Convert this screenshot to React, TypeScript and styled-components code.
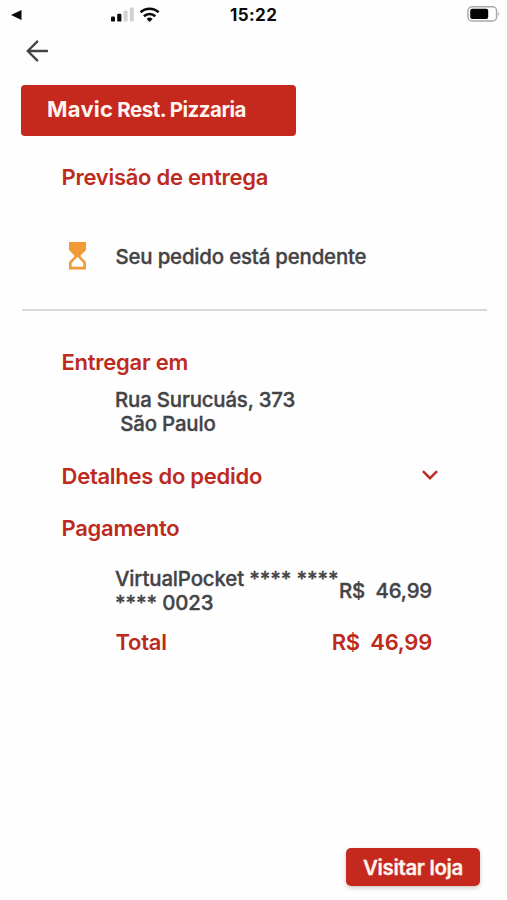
import React from "react";
import styled, { createGlobalStyle } from "styled-components";

const RED = "#c5281c";
const TEXT_RED = "#bd2a20";
const INK = "#444345";

const GlobalStyle = createGlobalStyle`
  * { box-sizing: border-box; }
  body { margin: 0; background: #fefefe; font-family: Inter, "Liberation Sans", sans-serif; }
`;

const Screen = styled.div`
  width: 507px;
  height: 900px;
  display: flex;
  flex-direction: column;
  background: #fefefe;
  color: ${INK};
  overflow: hidden;
`;

const StatusBar = styled.header`
  height: 30px;
  flex: none;
  display: grid;
  grid-template-columns: 110px 120px 237px 1fr;
  align-items: center;
`;

const BackToApp = styled.svg`
  width: 11px;
  height: 10px;
  margin-left: 11px;
`;

const SignalIcons = styled.svg`
  width: 50px;
  height: 17px;
  margin-bottom: 1px;
`;

const Clock = styled.time`
  font-size: 17px;
  line-height: 30px;
  font-weight: 700;
  letter-spacing: 0.4px;
  color: #0b0b0b;
`;

const Battery = styled.svg`
  width: 34px;
  height: 18px;
  margin-bottom: 2px;
`;

const NavBar = styled.nav`
  height: 55px;
  flex: none;
  padding: 9px 0 0 25px;
`;

const BackButton = styled.button`
  display: block;
  padding: 0;
  border: 0;
  background: none;
  color: ${INK};
  line-height: 0;
`;

const StoreBanner = styled.h1`
  flex: none;
  width: 275px;
  height: 51px;
  margin: 0 0 0 21px;
  padding-left: 26px;
  display: flex;
  align-items: baseline;
  gap: 4px;
  border-radius: 4px;
  background: ${RED};
  color: #fff4ef;
  line-height: 49px;
`;

const StoreName = styled.span`
  font-size: 22px;
  font-weight: 650;
  letter-spacing: 0.25px;
`;

const StoreKind = styled.span`
  font-size: 20.5px;
  font-weight: 700;
  letter-spacing: -0.5px;
`;

const Heading = styled.h2`
  margin: 0;
  font-size: 22px;
  line-height: 28px;
  font-weight: 600;
  letter-spacing: -0.26px;
  color: ${TEXT_RED};
  white-space: pre;
`;

const Forecast = styled.section`
  flex: none;
  height: 175px;
  margin: 0 20px 0 22px;
  padding: 27px 0 0 39.5px;
  border-bottom: 2px solid #d8d8d8;
`;

const OrderStatus = styled.div`
  display: flex;
  align-items: center;
  margin-top: 51px;
`;

const Hourglass = styled.svg`
  width: 18px;
  height: 28px;
  margin: 0 28.5px 0 7.5px;
`;

const Body = styled.p<{ $tracking?: number }>`
  margin: 0;
  padding-top: 1px;
  margin-bottom: -1px;
  font-size: 20.4px;
  line-height: 24.4px;
  font-weight: 500;
  letter-spacing: ${(p) => p.$tracking ?? -0.17}px;
  -webkit-text-stroke: 0.35px currentColor;
  white-space: pre;
`;

const Details = styled.main`
  padding: 37px 75px 0 61.5px;
`;

const Address = styled.div`
  margin: 11px 0 26px 53.5px;
  padding-bottom: 1px;
`;

const Toggle = styled.div`
  display: flex;
  justify-content: space-between;
  align-items: center;
  margin: -1px 0 24px;
`;

const Chevron = styled.svg`
  width: 18px;
  height: 12px;
  margin: 0 -7px 2px 0;
`;

const PaymentRow = styled.div`
  display: flex;
  align-items: center;
  justify-content: space-between;
  margin: 24px 0 13px 53.5px;
`;

const TotalRow = styled.div`
  display: flex;
  justify-content: space-between;
  margin-left: 54px;
`;

const Footer = styled.footer`
  margin-top: auto;
  padding: 0 27px 14px 0;
  display: flex;
  justify-content: flex-end;
`;

const VisitButton = styled.button`
  width: 134px;
  height: 38px;
  padding: 1px 0 0;
  border: 0;
  border-radius: 5px;
  background: ${RED};
  color: #fff4ef;
  font: 600 20.5px/37px Inter, "Liberation Sans", sans-serif;
  letter-spacing: -0.36px;
  -webkit-text-stroke: 0.3px currentColor;
  box-shadow: 0 2px 4px rgba(90, 40, 30, 0.25);
`;

export default function App() {
  return (
    <Screen>
      <GlobalStyle />
      <StatusBar>
        <BackToApp viewBox="0 0 11 10" aria-hidden>
          <path d="M0 5 10.5 0v10z" fill="#090909" />
        </BackToApp>
        <SignalIcons viewBox="0 0 50 17" aria-hidden>
          <rect x="1" y="10.6" width="4" height="5" rx="1.2" fill="#090909" />
          <rect x="7.2" y="7.8" width="4.2" height="7.8" rx="1.2" fill="#090909" />
          <rect x="13.6" y="4.4" width="4" height="11.2" rx="1.2" fill="#d2d2d2" />
          <rect x="19.8" y="1.4" width="4" height="14.2" rx="1.2" fill="#d2d2d2" />
          <g fill="none" stroke="#090909" strokeWidth="2.6">
            <path d="M30.6 6.3a13 13 0 0 1 18 0" />
            <path d="M33.9 10.2a8.4 8.4 0 0 1 11.4 0" />
          </g>
          <path d="M36.6 13a4.4 4.4 0 0 1 6 0l-3 3z" fill="#090909" />
        </SignalIcons>
        <Clock>15:22</Clock>
        <Battery viewBox="0 0 34 18" aria-hidden>
          <rect x="1" y="1.8" width="28.6" height="14.2" rx="4" fill="none" stroke="#aaa" strokeWidth="1.5" />
          <rect x="3.2" y="3.8" width="18" height="10.2" rx="2" fill="#050505" />
          <path d="M31.2 6.7q2 2.2 0 4.4z" fill="#aaa" />
        </Battery>
      </StatusBar>

      <NavBar>
        <BackButton aria-label="Voltar">
          <svg width="24" height="24" viewBox="0 0 24 24" fill="none" stroke="currentColor" strokeWidth="2.4" strokeLinecap="round" strokeLinejoin="round">
            <path d="M12.2 2.6 2.7 12l9.5 9.4M2.7 12H22" />
          </svg>
        </BackButton>
      </NavBar>

      <StoreBanner>
        <StoreName>Mavic</StoreName>
        <StoreKind>Rest. Pizzaria</StoreKind>
      </StoreBanner>

      <Forecast>
        <Heading>Previsão de entrega</Heading>
        <OrderStatus>
          <Hourglass viewBox="0 0 18 28" aria-hidden>
            <path d="M0 0h17v8L11.2 14l5.800 6v7.500H0V20l5.800-6L0 8z" fill="#f09a38" />
            <path d="M8.5 14.800 14.300 21v3.800H2.700V21z" fill="#fefefe" />
          </Hourglass>
          <Body>Seu pedido está pendente</Body>
        </OrderStatus>
      </Forecast>

      <Details>
        <Heading>Entregar em</Heading>
        <Address>
          <Body>Rua Surucuás, 373</Body>
          <Body>{" São Paulo"}</Body>
        </Address>
        <Toggle>
          <Heading>Detalhes do pedido</Heading>
          <Chevron viewBox="0 0 18 12" fill="none" stroke={TEXT_RED} strokeWidth="2.4" aria-hidden>
            <path d="M1.900 2.200 9 9.200 16.100 2.200" />
          </Chevron>
        </Toggle>
        <Heading>Pagamento</Heading>
        <PaymentRow>
          <Body $tracking={-0.13}>{"VirtualPocket **** ****\n**** 0023"}</Body>
          <Body>{"R$  46,99"}</Body>
        </PaymentRow>
        <TotalRow>
          <Heading>Total</Heading>
          <Heading>{"R$  46,99"}</Heading>
        </TotalRow>
      </Details>

      <Footer>
        <VisitButton>Visitar loja</VisitButton>
      </Footer>
    </Screen>
  );
}
